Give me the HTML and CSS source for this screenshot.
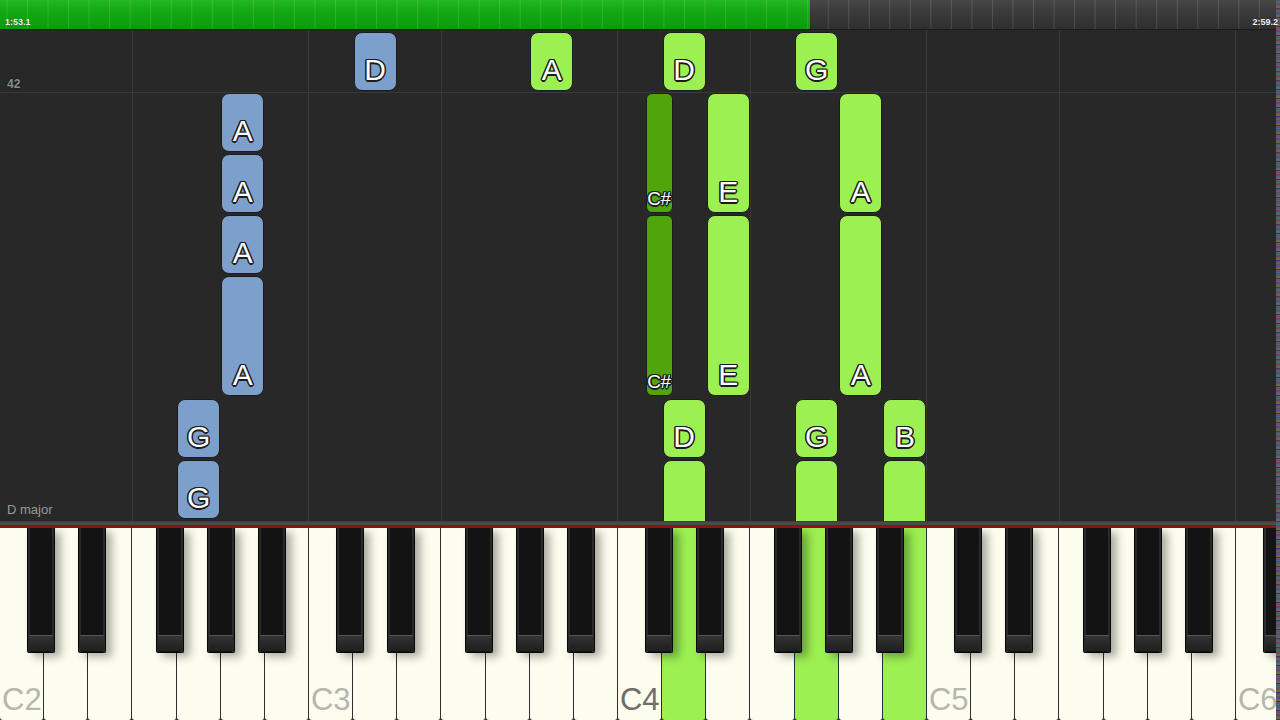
FILE: index.html
```html
<!DOCTYPE html>
<html lang="en">
<head>
<meta charset="utf-8">
<title>Piano roll</title>
<link rel="stylesheet" href="styles.css">
</head>
<body>
<div class="app">
  <header class="timeline">
    <div class="played"><span class="time">1:53.1</span></div>
    <div class="remaining"><span class="time">2:59.2</span></div>
  </header>

  <main class="roll">
    <span class="measure-no">42</span>
    <span class="key-sig">D major</span>

    <div class="note blue" style="left:353.6px;top:2px;height:59px"><span>D</span></div>
    <div class="note green" style="left:530.2px;top:2px;height:59px"><span>A</span></div>
    <div class="note green" style="left:662.6px;top:2px;height:59px"><span>D</span></div>
    <div class="note green" style="left:795.1px;top:2px;height:59px"><span>G</span></div>

    <div class="note blue" style="left:221.2px;top:63.1px;height:59px"><span>A</span></div>
    <div class="note blue" style="left:221.2px;top:124.2px;height:59px"><span>A</span></div>
    <div class="note blue" style="left:221.2px;top:185.3px;height:59px"><span>A</span></div>
    <div class="note blue" style="left:221.2px;top:246.4px;height:120px"><span>A</span></div>
    <div class="note blue" style="left:177.1px;top:368.6px;height:59px"><span>G</span></div>
    <div class="note blue" style="left:177.1px;top:429.7px;height:59px"><span>G</span></div>

    <div class="note dark sharp" style="left:645.5px;top:63.1px;height:120px"><span>C#</span></div>
    <div class="note dark sharp" style="left:645.5px;top:185.3px;height:181px"><span>C#</span></div>
    <div class="note green" style="left:706.8px;top:63.1px;height:120px"><span>E</span></div>
    <div class="note green" style="left:706.8px;top:185.3px;height:181px"><span>E</span></div>
    <div class="note green" style="left:839.2px;top:63.1px;height:120px"><span>A</span></div>
    <div class="note green" style="left:839.2px;top:185.3px;height:181px"><span>A</span></div>

    <div class="note green" style="left:662.6px;top:368.6px;height:59px"><span>D</span></div>
    <div class="note green" style="left:795.1px;top:368.6px;height:59px"><span>G</span></div>
    <div class="note green" style="left:883.4px;top:368.6px;height:59px"><span>B</span></div>
    <div class="note green" style="left:662.6px;top:429.7px;height:100px"></div>
    <div class="note green" style="left:795.1px;top:429.7px;height:100px"></div>
    <div class="note green" style="left:883.4px;top:429.7px;height:100px"></div>
  </main>

  <div class="rail"></div>

  <section class="keyboard">
    <div class="whites">
      <div class="white"><span class="oct">C2</span></div>
      <div class="white"></div>
      <div class="white"></div>
      <div class="white"></div>
      <div class="white"></div>
      <div class="white"></div>
      <div class="white"></div>
      <div class="white"><span class="oct">C3</span></div>
      <div class="white"></div>
      <div class="white"></div>
      <div class="white"></div>
      <div class="white"></div>
      <div class="white"></div>
      <div class="white"></div>
      <div class="white"><span class="oct cur">C4</span></div>
      <div class="white on"></div>
      <div class="white"></div>
      <div class="white"></div>
      <div class="white on"></div>
      <div class="white"></div>
      <div class="white on"></div>
      <div class="white"><span class="oct">C5</span></div>
      <div class="white"></div>
      <div class="white"></div>
      <div class="white"></div>
      <div class="white"></div>
      <div class="white"></div>
      <div class="white"></div>
      <div class="white"><span class="oct">C6</span></div>
    </div>
    <div class="black" style="left:27px"></div>
    <div class="black" style="left:78px"></div>
    <div class="black" style="left:156px"></div>
    <div class="black" style="left:207px"></div>
    <div class="black" style="left:258px"></div>
    <div class="black" style="left:336px"></div>
    <div class="black" style="left:387px"></div>
    <div class="black" style="left:465px"></div>
    <div class="black" style="left:516px"></div>
    <div class="black" style="left:567px"></div>
    <div class="black" style="left:645px"></div>
    <div class="black" style="left:696px"></div>
    <div class="black" style="left:774px"></div>
    <div class="black" style="left:825px"></div>
    <div class="black" style="left:876px"></div>
    <div class="black" style="left:954px"></div>
    <div class="black" style="left:1005px"></div>
    <div class="black" style="left:1083px"></div>
    <div class="black" style="left:1134px"></div>
    <div class="black" style="left:1185px"></div>
    <div class="black" style="left:1263px"></div>
  </section>

  <div class="noise"></div>
</div>
</body>
</html>
```

FILE: styles.css
```css
* { box-sizing: border-box; }

html, body {
  margin: 0;
  padding: 0;
  background: #282828;
}

.app {
  position: relative;
  width: 1280px;
  height: 720px;
  overflow: hidden;
  display: flex;
  flex-direction: column;
  font-family: "Liberation Sans", Arial, sans-serif;
}

/* ---------- timeline ---------- */
.timeline {
  position: relative;
  flex: 0 0 30px;
  display: flex;
  border-bottom: 1px solid #1b1b1b;
}

.timeline::after {
  content: "";
  position: absolute;
  inset: 0;
  background-image: linear-gradient(90deg, rgba(255,255,255,0.13) 0 1px, transparent 1px);
  background-size: 20.54px 100%;
  background-position: 6.46px 0;
  pointer-events: none;
}

.played {
  flex: 0 0 810px;
  display: flex;
  align-items: flex-end;
  padding: 0 0 2px 5px;
  background: linear-gradient(#23b823, #14a814 40%, #0b9b0b);
}

.remaining {
  flex: 1 1 auto;
  display: flex;
  align-items: flex-end;
  justify-content: flex-end;
  padding: 0 2px 2px 0;
  background: linear-gradient(#474747, #3b3b3b 38%, #2f2f2f);
}

.time {
  position: relative;
  z-index: 1;
  color: #f4f4f4;
  font-size: 9px;
  font-weight: bold;
  line-height: 9px;
  text-shadow: 0 0 1px rgba(0,0,0,0.6);
}

/* ---------- note roll ---------- */
.roll {
  position: relative;
  flex: 0 0 491px;
  overflow: hidden;
  background-color: #282828;
  background-image:
    linear-gradient(#383838, #383838),
    repeating-linear-gradient(90deg, transparent 0 132px, #383838 132px 133px, transparent 133px 308px, #3b3b3b 308px 309px);
  background-size: 100% 1px, 100% 100%;
  background-position: 0 62px, 0 0;
  background-repeat: no-repeat, no-repeat;
}

.measure-no {
  position: absolute;
  left: 7px;
  top: 47px;
  font-size: 12px;
  font-weight: bold;
  color: #8c8c8c;
  text-shadow: 0 0 2px rgba(0,0,0,0.7);
}

.key-sig {
  position: absolute;
  left: 7px;
  top: 472px;
  font-size: 13px;
  color: #9a9a9a;
}

.note {
  position: absolute;
  width: 43px;
  border: 1.5px solid #1c1c1c;
  border-radius: 8px;
  display: flex;
  flex-direction: column;
  justify-content: flex-end;
  align-items: center;
  padding-bottom: 5px;
}

.note span {
  font-size: 30px;
  line-height: 1;
  color: #ffffff;
  text-shadow:
    -1.5px 0 0 #1c1c1c, 1.5px 0 0 #1c1c1c,
    0 -1.5px 0 #1c1c1c, 0 1.5px 0 #1c1c1c,
    -1px -1px 0 #1c1c1c, 1px -1px 0 #1c1c1c,
    -1px 1px 0 #1c1c1c, 1px 1px 0 #1c1c1c;
}

.note.blue  { background: #7c9fcb; }
.note.green { background: #9cf052; }
.note.dark  { background: #50a50d; width: 27px; border-radius: 6px; }

.note.sharp { padding-bottom: 4px; }
.note.sharp span {
  font-size: 19px;
  letter-spacing: -0.5px;
}

/* ---------- rail ---------- */
.rail {
  flex: 0 0 7px;
  background: linear-gradient(#3e3e3e 0 1px, #4a4a4a 1px 4px, #8e1212 4px 7px);
}

/* ---------- keyboard ---------- */
.keyboard {
  position: relative;
  flex: 1 1 auto;
  overflow: hidden;
  background: #2a2a2a;
}

.whites {
  display: flex;
  height: 100%;
}

.white {
  flex: 1 1 0;
  display: flex;
  align-items: flex-end;
  padding: 0 0 5px 2px;
  background: #fdfdef;
  border-right: 1.5px solid #2e2e2e;
  border-radius: 0 0 3px 3px;
}

.white.on { background: #9cf052; }

.oct {
  font-size: 31px;
  line-height: 1;
  color: #b6b6ae;
}

.oct.cur { color: #6e6e69; }

.black {
  position: absolute;
  top: 0;
  width: 28px;
  height: 125px;
  background: linear-gradient(90deg, #2a2a2a 0 2px, #131313 2px calc(100% - 2px), #2a2a2a calc(100% - 2px));
  border: 1.5px solid #050505;
  border-top: 0;
  border-radius: 0 0 2px 2px;
  box-shadow: 6px 4px 8px rgba(0,0,0,0.32);
}

.black::after {
  content: "";
  position: absolute;
  left: 1px;
  right: 1px;
  bottom: 1px;
  height: 16px;
  border-radius: 1px;
  background: linear-gradient(#555555 0 1px, #353535 1px, #262626 60%, #202020);
}

/* ---------- right edge artefact ---------- */
.noise {
  position: absolute;
  top: 0;
  right: 0;
  width: 4px;
  height: 100%;
  background: repeating-linear-gradient(180deg,
    #5d4f80 0 2px, #2f7d6f 2px 3px, #7c4066 3px 5px,
    #3f6090 5px 6px, #6a6a3c 6px 8px, #3a3a5a 8px 9px);
}
```
